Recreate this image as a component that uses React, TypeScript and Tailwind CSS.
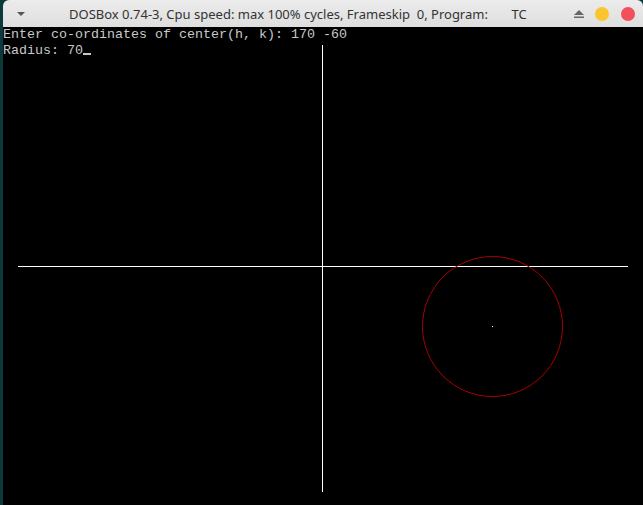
export default function App() {
  return (
    <div className="flex h-[505px] w-[643px] overflow-hidden bg-[#0c3a3a]">
      <div className="ml-[3px] flex w-[640px] flex-col">
        {/* title bar */}
        <div className="flex h-[27px] shrink-0 items-center rounded-t-[6px] bg-gradient-to-b from-[#ececec] to-[#dedede] pl-[13px] pr-[8px] text-[#333] [font-family:'Noto_Sans',sans-serif]">
          <svg width="10" height="6" viewBox="0 0 10 6">
            <path d="M1 1h8L5 5z" fill="#555" />
          </svg>
          <div className="ml-[43px] whitespace-pre text-[13px] leading-[18px]">
            DOSBox 0.74-3, Cpu speed: max 100% cycles, Frameskip  0, Program:       TC
          </div>
          <div className="ml-auto flex items-center gap-[12px]">
            <svg className="mr-[-2px]" width="12" height="10" viewBox="0 0 12 10">
              <path d="M6 1l5 5H1z" fill="#666" />
              <rect x="1" y="7.5" width="10" height="1.5" fill="#666" />
            </svg>
            <div className="h-[14px] w-[14px] rounded-full bg-[#fcc42d]" />
            <div className="h-[14px] w-[14px] rounded-full bg-[#f2505a]" />
          </div>
        </div>
        {/* DOS screen */}
        <div className="relative flex-1 bg-black">
          <div className="whitespace-pre text-[13.33px] leading-[16px] text-[#c8c8c8] [font-family:'Liberation_Mono',monospace]">
            <div>Enter co-ordinates of center(h, k): 170 -60</div>
            <div>
              Radius: 70<span className="inline-block h-[2px] w-[8px] bg-[#c8c8c8] align-[-1px]" />
            </div>
          </div>
          <svg className="absolute inset-0" width="640" height="478" viewBox="0 0 640 478" shapeRendering="crispEdges">
            <line x1="15" y1="239.5" x2="625" y2="239.5" stroke="#fff" strokeWidth="1" />
            <line x1="319.5" y1="18" x2="319.5" y2="465" stroke="#fff" strokeWidth="1" />
            <circle cx="489.5" cy="299.5" r="70" fill="none" stroke="#aa0000" strokeWidth="1" shapeRendering="auto" />
            <rect x="489" y="299" width="1" height="1" fill="#fff" />
          </svg>
        </div>
      </div>
    </div>
  );
}
